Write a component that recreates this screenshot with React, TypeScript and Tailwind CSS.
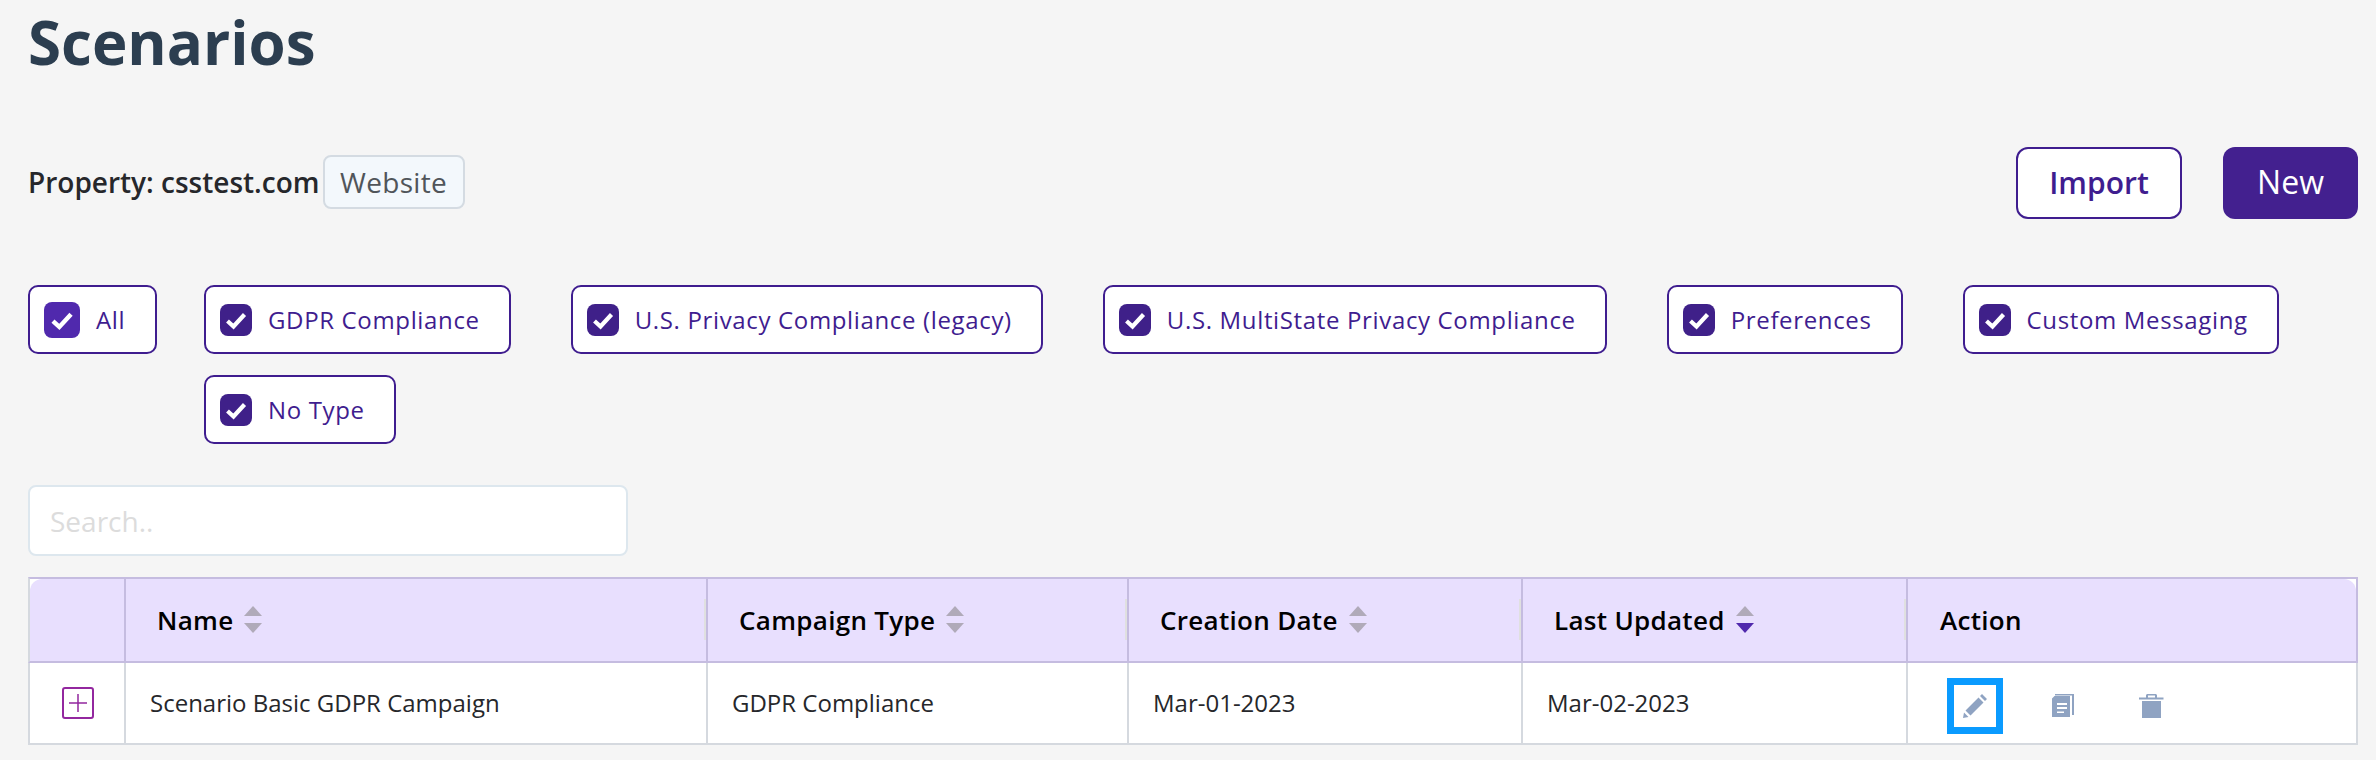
import React from "react";

const Check = ({ size }: { size: number }) => (
  <svg width={size} height={size} viewBox="0 0 32 32" fill="none">
    <path d="M7.500 17l6 5.500L24.500 10.500" stroke="#fff" strokeWidth="4.2" />
  </svg>
);

const Filter = ({ label, first }: { label: string; first?: boolean }) => (
  <div className={`flex h-[69px] items-center rounded-[10px] border-2 border-[#3f1d8f] bg-white pl-[14px] ${first ? "w-[129px] shrink-0" : "pr-[29px]"}`}>
    {first ? (
      <span className="flex h-[36px] w-[36px] items-center justify-center rounded-[8px] bg-[#5029ad]"><Check size={34} /></span>
    ) : (
      <span className="flex h-[32px] w-[32px] items-center justify-center rounded-[8px] bg-[#3f2089]"><Check size={32} /></span>
    )}
    <span className={`ml-[16px] text-[24px] leading-none tracking-[0.65px] text-[#3f1d8f]`}>{label}</span>
  </div>
);

const Sort = ({ active }: { active?: boolean }) => (
  <svg width="18" height="28" viewBox="0 0 18 28" className="ml-[11px] shrink-0">
    <path d="M9 0l9 10H0z" fill="#b0aab9" />
    <path d="M9 27L0 17h18z" fill={active ? "#5029ad" : "#b0aab9"} />
  </svg>
);

const Head = ({ label, sort, active }: { label: string; sort?: boolean; active?: boolean }) => (
  <th className="relative h-[86px] border-y-2 border-r-2 border-[#c5bce0] bg-[#e8dffe] p-0 pl-[31px] text-left font-semibold">
    <div className="flex items-center text-[26px] tracking-[0.3px] text-black">
      {label}
      {sort && <Sort active={active} />}
    </div>
    <span className="absolute right-0 top-[20px] h-[41px] w-[2px] bg-[#e0e0e0]" />
  </th>
);

const Cell = ({ children }: { children: React.ReactNode }) => (
  <td className="h-[82px] border-b-2 border-r-2 border-[#d5d9df] p-0 pl-[24px] text-[24px] text-[#26272b]">{children}</td>
);

export default function App() {
  return (
    <div className="h-[760px] overflow-hidden bg-[#f5f5f5] pl-[28px] pr-[18px] font-['Open_Sans',sans-serif]">
      <h1 className="h-[87px] text-[60px] font-bold leading-[85px] text-[#2c3e50]">Scenarios</h1>

      <div className="mt-[60px] flex h-[72px] items-center justify-between">
        <div className="flex items-center pb-[2px]">
          <span className="text-[28px] font-semibold text-[#26272b]">Property: csstest.com</span>
          <span className="ml-[3px] flex h-[54px] w-[142px] items-center justify-center rounded-[8px] border-2 border-[#d4dbe2] bg-[#f3f8fc] text-[28px] tracking-[0.3px] text-[#50555a]">Website</span>
        </div>
        <div className="flex gap-[41px]">
          <button className="h-[72px] w-[166px] rounded-[12px] border-2 border-[#3f1d8f] bg-white pb-[2px] text-[30px] font-semibold text-[#3f1d8f]">Import</button>
          <button className="h-[72px] w-[135px] rounded-[12px] bg-[#43208f] pb-[2px] text-[32px] text-white">New</button>
        </div>
      </div>

      <div className="mt-[66px] flex items-start gap-[47px]">
        <Filter label="All" first />
        <div className="flex flex-wrap gap-x-[60px] gap-y-[21px]">
          <Filter label="GDPR Compliance" />
          <Filter label="U.S. Privacy Compliance (legacy)" />
          <Filter label="U.S. MultiState Privacy Compliance" />
          <Filter label="Preferences" />
          <Filter label="Custom Messaging" />
          <Filter label="No Type" />
        </div>
      </div>

      <input
        placeholder="Search.."
        className="mt-[41px] block h-[71px] w-[600px] rounded-[8px] border-2 border-[#dde7ee] bg-white px-[20px] text-[28px] outline-none placeholder:text-[#dcdcdc]"
      />

      <table className="mt-[21px] w-[2330px] table-fixed border-separate border-spacing-0 bg-white">
        <colgroup>
          <col className="w-[98px]" />
          <col className="w-[582px]" />
          <col className="w-[421px]" />
          <col className="w-[394px]" />
          <col className="w-[385px]" />
          <col className="w-[450px]" />
        </colgroup>
        <thead>
          <tr>
            <th className="h-[86px] border-y-2 border-r-2 border-l-2 border-[#c5bce0] border-l-[#d5d9df] bg-white p-0">
              <div className="h-[82px] rounded-tl-[12px] bg-[#e8dffe]" />
            </th>
            <Head label="Name" sort />
            <Head label="Campaign Type" sort />
            <Head label="Creation Date" sort />
            <Head label="Last Updated" sort active />
            <th className="h-[86px] border-y-2 border-r-2 border-[#c5bce0] bg-white p-0 text-left text-[26px] font-semibold tracking-[0.3px] text-black">
              <div className="flex h-[82px] items-center rounded-tr-[12px] bg-[#e8dffe] pl-[32px]">Action</div>
            </th>
          </tr>
        </thead>
        <tbody>
          <tr>
            <td className="h-[82px] border-x-2 border-b-2 border-[#d5d9df] p-0">
              <span className="ml-[32px] flex h-[32px] w-[32px] items-center justify-center rounded-[3px] border-2 border-[#93279f]">
                <svg width="18" height="18" viewBox="0 0 18 18"><path d="M9 0v18M0 9h18" stroke="#93279f" strokeWidth="1.5" /></svg>
              </span>
            </td>
            <Cell>Scenario Basic GDPR Campaign</Cell>
            <Cell>GDPR Compliance</Cell>
            <Cell>Mar-01-2023</Cell>
            <Cell>Mar-02-2023</Cell>
            <td className="h-[82px] border-b-2 border-r-2 border-[#d5d9df] p-0 pl-[39px]">
              <div className="flex items-center pt-[6px]">
                <span className="flex h-[56px] w-[56px] items-center justify-center border-[7px] border-[#0a9bff]">
                  <svg width="24" height="24" viewBox="0 0 24 24" fill="#8fa3c2">
                    <path d="M0 24l1-5.500 4.500 4.500zM2.500 16.500L15.500 3.500l5 5-13 13zM17 2l2-2 5 5-2 2z" />
                  </svg>
                </span>
                <svg width="24" height="24" viewBox="0 0 24 24" className="ml-[49px]" fill="#8fa3c2">
                  <path fillRule="evenodd" d="M0 4.500L2.500 2H18v21H0zM5 9h10v2H5zM5 13h10v2H5zM5 17.500h7v1.500H5z" />
                  <path d="M3 0h19v21h-2V1.500H3z" />
                </svg>
                <svg width="25" height="24" viewBox="0 0 25 24" className="ml-[63px]" fill="#8fa3c2">
                  <path fillRule="evenodd" d="M0 3.500h7V1l1-1h9l1 1v2.500h6.500v2H0zM9 1.500v2h7v-2z" />
                  <path d="M3 7h19v17H3z" />
                </svg>
              </div>
            </td>
          </tr>
        </tbody>
      </table>
    </div>
  );
}
